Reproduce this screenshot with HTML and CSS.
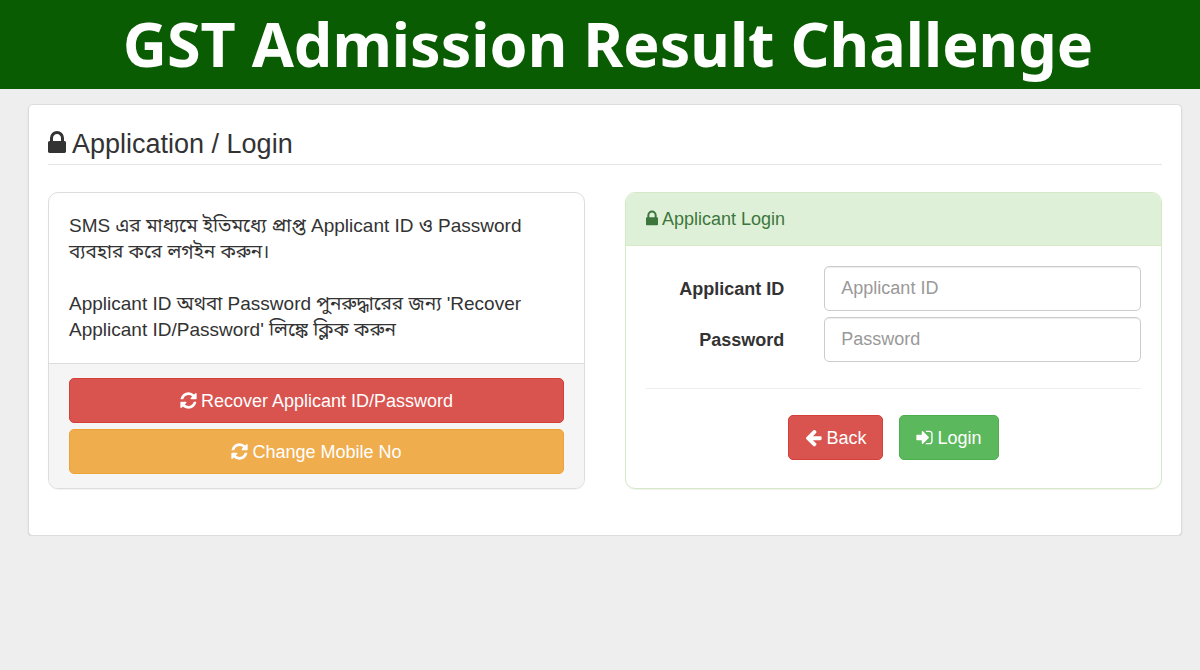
FILE: index.html
```html
<!DOCTYPE html>
<html lang="en">
<head>
  <meta charset="UTF-8" />
  <meta name="viewport" content="width=device-width, initial-scale=1.0" />
  <title>GST Admission Result Challenge</title>
  <link rel="stylesheet" href="styles.css">
</head>
<body>
  <!-- Icon shapes used below -->
  <svg class="sprite" aria-hidden="true">
    <symbol id="lock" viewBox="0 0 1152 1792">
      <path d="M320 768h512V576q0-106-75-181t-181-75-181 75-75 181v192zm832 96v576q0 40-28 68t-68 28H96q-40 0-68-28t-28-68V864q0-40 28-68t68-28h32V576q0-184 132-316t316-132 316 132 132 316v192h32q40 0 68 28t28 68z"/>
    </symbol>
    <symbol id="refresh" viewBox="0 0 1536 1792">
      <path d="M1511 1056q0 5-1 7-64 268-268 434.500t-478 166.500q-146 0-282.500-55t-243.500-157l-129 129q-19 19-45 19t-45-19-19-45v-448q0-26 19-45t45-19h448q26 0 45 19t19 45-19 45l-137 137q71 66 161 102t187 36q134 0 250-65t186-179q11-17 53-117 8-23 30-23h192q13 0 22.500 9.500t9.500 22.500zm25-800v448q0 26-19 45t-45 19h-448q-26 0-45-19t-19-45 19-45l138-138q-148-137-349-137-134 0-250 65t-186 179q-11 17-53 117-8 23-30 23h-199q-13 0-22.500-9.500t-9.500-22.500v-7q65-268 270-434.500t480-166.500q146 0 284 55.500t245 156.500l130-129q19-19 45-19t45 19 19 45z"/>
    </symbol>
    <symbol id="arrow-left" viewBox="128 0 1536 1792">
      <path d="M1664 896v128q0 53-32.500 90.500t-84.500 37.500h-704l293 294q38 36 38 90t-38 90l-75 76q-37 37-90 37-52 0-91-37l-651-652q-37-37-37-90 0-52 37-91l651-650q38-38 91-38 52 0 90 38l75 74q38 38 38 91t-38 91l-293 293h704q52 0 84.500 37.500t32.500 90.500z"/>
    </symbol>
    <symbol id="sign-in" viewBox="128 0 1536 1792">
      <path d="M1312 896q0 26-19 45l-544 544q-19 19-45 19t-45-19-19-45v-288h-448q-26 0-45-19t-19-45v-384q0-26 19-45t45-19h448v-288q0-26 19-45t45-19 45 19l544 544q19 19 19 45zm352-352v704q0 119-84.500 203.500t-203.500 84.500h-320q-13 0-22.500-9.500t-9.500-22.500q0-4-1-20t-.5-26.500 3-23.500 10-19.500 20.500-6.500h320q66 0 113-47t47-113v-704q0-66-47-113t-113-47h-312l-11.500-1-11.500-3-8-5.500-7-9-2-13.500q0-4-1-20t-.5-26.500 3-23.500 10-19.500 20.500-6.500h320q119 0 203.500 84.500t84.500 203.500z"/>
    </symbol>
  </svg>

  <header class="banner">
    <h1>GST Admission Result Challenge</h1>
  </header>

  <main class="card">
    <h2 class="page-title"><svg class="icon icon-title"><use href="#lock"/></svg>Application / Login</h2>

    <div class="columns">
      <section class="panel">
        <div class="panel-body info" lang="bn">
          <p>SMS এর মাধ্যমে ইতিমধ্যে প্রাপ্ত Applicant ID ও Password ব্যবহার করে লগইন করুন।</p>
          <p>Applicant ID অথবা Password পুনরুদ্ধারের জন্য 'Recover Applicant ID/Password' লিঙ্কে ক্লিক করুন</p>
        </div>
        <div class="panel-footer">
          <button type="button" class="btn btn-danger"><svg class="icon"><use href="#refresh"/></svg>Recover Applicant ID/Password</button>
          <button type="button" class="btn btn-warning"><svg class="icon"><use href="#refresh"/></svg>Change Mobile No</button>
        </div>
      </section>

      <section class="panel panel-success">
        <h3 class="panel-heading"><svg class="icon icon-lock"><use href="#lock"/></svg>Applicant Login</h3>
        <form class="panel-body">
          <div class="form-row">
            <label for="applicantId">Applicant ID</label>
            <div class="field"><input type="text" id="applicantId" placeholder="Applicant ID"></div>
          </div>
          <div class="form-row">
            <label for="password">Password</label>
            <div class="field"><input type="password" id="password" placeholder="Password"></div>
          </div>
          <hr>
          <div class="actions">
            <button type="button" class="btn btn-danger"><svg class="icon"><use href="#arrow-left"/></svg>Back</button>
            <button type="submit" class="btn btn-success"><svg class="icon"><use href="#sign-in"/></svg>Login</button>
          </div>
        </form>
      </section>
    </div>
  </main>
</body>
</html>
```

FILE: styles.css
```css
* {
  box-sizing: border-box;
}
body {
  margin: 0;
  background: #eee;
  color: #333;
  font-family: "Liberation Sans", Arial, "Noto Sans Bengali", sans-serif;
  font-size: 18px;
  line-height: 26px;
}
h1, h2, h3, p {
  margin: 0;
  font-weight: normal;
}
.sprite {
  display: none;
}

/* Top banner */
.banner {
  background: #0a5c02;
  color: #fff;
  padding: 0 0 1px 16px;
  text-align: center;
}
.banner h1 {
  font-family: "Noto Sans", "Open Sans", sans-serif;
  font-size: 61px;
  font-weight: bold;
  line-height: 88px;
}

/* Icons */
.icon {
  width: 17px;
  height: 19px;
  margin-right: 4px;
  vertical-align: -3px;
  fill: currentColor;
}
.icon-lock {
  width: 12px;
}
.icon-title {
  width: 18px;
  height: 28px;
  margin-right: 6px;
  vertical-align: -4px;
}

/* Main card */
.card {
  margin: 15px 18px 0 28px;
  padding: 20px 19px 46px;
  background: #fff;
  border: 1px solid #ddd;
  border-radius: 5px;
  box-shadow: 0 1px 2px rgba(0, 0, 0, 0.1);
}
.page-title {
  padding-bottom: 1px;
  margin-bottom: 27px;
  border-bottom: 1px solid #e5e5e5;
  font-size: 27px;
  line-height: 38px;
}
.columns {
  display: flex;
  gap: 40px;
}

/* Panels */
.panel {
  flex: 1;
  border: 1px solid #ddd;
  border-radius: 10px;
  overflow: hidden;
  box-shadow: 0 1px 1px rgba(0, 0, 0, 0.05);
}
.panel-body {
  padding: 20px;
}
.info {
  font-size: 19px;
}
.info p + p {
  margin-top: 26px;
}
.panel-footer {
  display: flex;
  flex-direction: column;
  gap: 6px;
  padding: 14px 20px;
  background: #f5f5f5;
  border-top: 1px solid #ddd;
}
.panel-success {
  border-color: #d6e9c6;
}
.panel-heading {
  padding: 13px 20px;
  background: #dff0d8;
  border-bottom: 1px solid #d6e9c6;
  color: #3c763d;
  font-size: 18px;
}

/* Login form */
.form-row {
  display: flex;
  align-items: center;
  margin: 0 -20px 6px;
}
.form-row label {
  width: 33.333%;
  padding: 0 20px;
  font-weight: bold;
  text-align: right;
}
.field {
  flex: 1;
  padding: 0 20px;
}
.field input {
  display: block;
  width: 100%;
  height: 45px;
  padding: 8px 16px;
  border: 1px solid #ccc;
  border-radius: 5px;
  background: #fff;
  box-shadow: inset 0 1px 1px rgba(0, 0, 0, 0.075);
  color: #555;
  font: inherit;
}
.field input::placeholder {
  color: #999;
}
hr {
  margin: 26px 0;
  border: 0;
  border-top: 1px solid #eee;
}
.actions {
  display: flex;
  justify-content: center;
  gap: 16px;
}

/* Buttons */
.btn {
  height: 45px;
  padding: 0 16px;
  border: 1px solid transparent;
  border-radius: 5px;
  color: #fff;
  font: inherit;
  cursor: pointer;
}
.btn-danger {
  background: #d9534f;
  border-color: #d43f3a;
}
.btn-warning {
  background: #f0ad4e;
  border-color: #eea236;
}
.btn-success {
  background: #5cb85c;
  border-color: #4cae4c;
}
```
